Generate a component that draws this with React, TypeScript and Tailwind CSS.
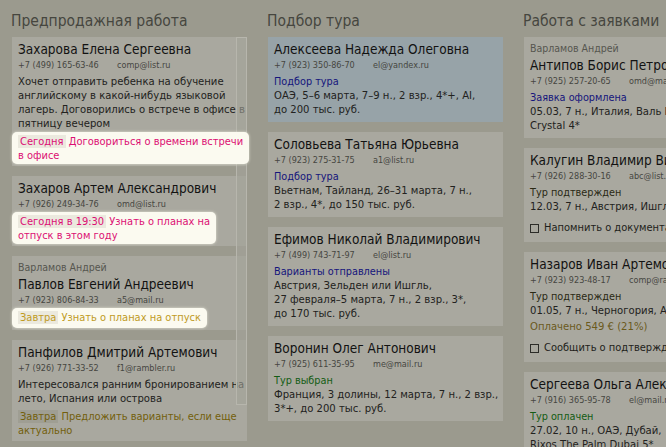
import type { ReactNode } from "react";

type Tone = "pink" | "gold" | "olive";
type StatusTone = "navy" | "green" | "dark";

type Reminder = { tag: string; text: string[]; tone: Tone; lit?: boolean; roomy?: boolean };

type Lead = {
  manager?: string;
  name: string;
  phone: string;
  email: string;
  status?: { label: string; tone: StatusTone };
  lines?: string[];
  paid?: string;
  check?: string;
  reminder?: Reminder;
  tint?: boolean;
};

const reminderTone: Record<Tone, string> = {
  pink: "text-[#dc0f73]",
  gold: "text-[#c09a1e]",
  olive: "text-[#735f0c]",
};

const statusTone: Record<StatusTone, string> = {
  navy: "text-[#15157c]",
  green: "text-[#145c14]",
  dark: "text-[#2a2914]",
};

const presale: Lead[] = [
  {
    name: "Захарова Елена Сергеевна",
    phone: "+7 (499) 165-63-46",
    email: "comp@list.ru",
    lines: [
      "Хочет отправить ребенка на обучение",
      "английскому в какой-нибудь языковой",
      "лагерь. Договорились о встрече в офисе в",
      "пятницу вечером",
    ],
    reminder: {
      tag: "Сегодня",
      text: ["Договориться о времени встречи", "в офисе"],
      tone: "pink",
      lit: true,
    },
  },
  {
    name: "Захаров Артем Александрович",
    phone: "+7 (926) 249-34-76",
    email: "omd@list.ru",
    reminder: {
      tag: "Сегодня в 19:30",
      text: ["Узнать о планах на", "отпуск в этом году"],
      tone: "pink",
      lit: true,
    },
  },
  {
    manager: "Варламов Андрей",
    name: "Павлов Евгений Андреевич",
    phone: "+7 (923) 806-84-33",
    email: "a5@mail.ru",
    reminder: {
      tag: "Завтра",
      text: ["Узнать о планах на отпуск"],
      tone: "gold",
      lit: true,
      roomy: true,
    },
  },
  {
    name: "Панфилов Дмитрий Артемович",
    phone: "+7 (926) 771-33-52",
    email: "f1@rambler.ru",
    lines: ["Интересовался ранним бронированием на", "лето, Испания или острова"],
    reminder: {
      tag: "Завтра",
      text: ["Предложить варианты, если еще", "актуально"],
      tone: "olive",
    },
  },
];

const selection: Lead[] = [
  {
    tint: true,
    name: "Алексеева Надежда Олеговна",
    phone: "+7 (923) 350-86-70",
    email: "el@yandex.ru",
    status: { label: "Подбор тура", tone: "navy" },
    lines: ["ОАЭ, 5–6 марта, 7–9 н., 2 взр., 4*+, AI,", "до 200 тыс. руб."],
  },
  {
    name: "Соловьева Татьяна Юрьевна",
    phone: "+7 (923) 275-31-75",
    email: "a1@list.ru",
    status: { label: "Подбор тура", tone: "navy" },
    lines: ["Вьетнам, Тайланд, 26–31 марта, 7 н.,", "2 взр., 4*, до 150 тыс. руб."],
  },
  {
    name: "Ефимов Николай Владимирович",
    phone: "+7 (499) 743-71-97",
    email: "el@list.ru",
    status: { label: "Варианты отправлены", tone: "navy" },
    lines: [
      "Австрия, Зельден или Ишгль,",
      "27 февраля–5 марта, 7 н., 2 взр., 3*,",
      "до 170 тыс. руб.",
    ],
  },
  {
    name: "Воронин Олег Антонович",
    phone: "+7 (925) 611-35-95",
    email: "me@mail.ru",
    status: { label: "Тур выбран", tone: "green" },
    lines: ["Франция, 3 долины, 12 марта, 7 н., 2 взр.,", "3*+, до 200 тыс. руб."],
  },
];

const orders: Lead[] = [
  {
    manager: "Варламов Андрей",
    name: "Антипов Борис Петрович",
    phone: "+7 (925) 257-20-65",
    email: "omd@mail.ru",
    status: { label: "Заявка оформлена", tone: "navy" },
    lines: ["05.03, 7 н., Италия, Валь Гардена,", "Crystal 4*"],
  },
  {
    name: "Калугин Владимир Викторович",
    phone: "+7 (926) 288-30-16",
    email: "abc@list.ru",
    status: { label: "Тур подтвержден", tone: "dark" },
    lines: ["12.03, 7 н., Австрия, Ишгль, Elisabeth"],
    check: "Напомнить о документах",
  },
  {
    name: "Назаров Иван Артемович",
    phone: "+7 (923) 923-48-17",
    email: "comp@rambler.ru",
    status: { label: "Тур подтвержден", tone: "dark" },
    lines: ["01.05, 7 н., Черногория, Авала 4*"],
    paid: "Оплачено 549 € (21%)",
    check: "Сообщить о подтверждении",
  },
  {
    name: "Сергеева Ольга Алексеевна",
    phone: "+7 (916) 365-95-78",
    email: "el@mail.ru",
    status: { label: "Тур оплачен", tone: "green" },
    lines: ["27.02, 10 н., ОАЭ, Дубай,", "Rixos The Palm Dubai 5*"],
  },
];

function ReminderBox({ reminder }: { reminder: Reminder }) {
  const { tag, text, tone, lit, roomy } = reminder;
  return (
    <div
      className={`relative z-10 -mx-[6px] mt-[1px] w-fit rounded-[5px] px-[6px] text-[11px] leading-[14px] whitespace-nowrap ${
        roomy ? "py-[3px]" : "pt-[3px] pb-[1px]"
      } ${reminderTone[tone]} ${lit ? "bg-[#fbfaf0] shadow-[0_0_3px_rgba(255,255,240,0.7)]" : ""}`}
    >
      <span className={`px-[2px] ${lit ? "bg-[#ebe9de]" : "bg-[#9f9e93]"}`}>{tag}</span>{" "}
      {text.map((t, i) => (
        <span key={i}>
          {i > 0 && <br />}
          {t}
        </span>
      ))}
    </div>
  );
}

function LeadCard({ lead }: { lead: Lead }) {
  const pb = lead.reminder ? "pb-[2px]" : lead.check ? "pb-[7px]" : "pb-[5px]";
  return (
    <div className={`px-[6px] pt-[3px] ${pb} ${lead.tint ? "bg-[#97a3a8]" : "bg-[#a9a89f]"}`}>
      {lead.manager && (
        <div className="text-[10.5px] leading-[16px] text-[#56564f]">{lead.manager}</div>
      )}
      <div className="whitespace-nowrap text-[13.5px] leading-[18px] text-[#121212]">{lead.name}</div>
      <div className="flex whitespace-nowrap text-[9px] leading-[14px] text-[#46463f]">
        <span className="w-[99px] shrink-0">{lead.phone}</span>
        <span>{lead.email}</span>
      </div>
      {lead.status && (
        <div className={`mt-[2px] text-[10.8px] leading-[15px] ${statusTone[lead.status.tone]}`}>
          {lead.status.label}
        </div>
      )}
      {lead.lines && (
        <div className={`text-[11.2px] leading-[14px] text-[#222220] ${lead.status ? "" : "mt-[3px]"}`}>
          {lead.lines.map((l) => (
            <div key={l} className="whitespace-nowrap">
              {l}
            </div>
          ))}
        </div>
      )}
      {lead.paid && (
        <div className="mt-[2px] text-[11.2px] leading-[14px] text-[#6b5a1c]">{lead.paid}</div>
      )}
      {lead.check && (
        <div className="mt-[7px] flex items-center gap-[5px] whitespace-nowrap text-[11px] leading-[14px] text-[#1e1e1a]">
          <span className="h-[9px] w-[9px] shrink-0 border border-[#2c2c28]" />
          {lead.check}
        </div>
      )}
      {lead.reminder && <ReminderBox reminder={lead.reminder} />}
    </div>
  );
}

function Column({ title, children }: { title: string; children: ReactNode }) {
  return (
    <div className="w-[235px] shrink-0">
      <h2 className="-ml-px pt-[10px] pb-[5px] text-[15.5px] leading-[22px] font-normal whitespace-nowrap text-[#46463f]">
        {title}
      </h2>
      {children}
    </div>
  );
}

export default function App() {
  return (
    <div className="h-[447px] w-[666px] overflow-hidden bg-[#9b9a8e] font-['DejaVu_Sans_Condensed','Liberation_Sans',sans-serif]">
      <div className="flex gap-[21px] pl-[12px]">
        <Column title="Предпродажная работа">
          <div className="relative flex flex-col gap-[10px]">
            {presale.map((lead) => (
              <LeadCard key={lead.name} lead={lead} />
            ))}
            {/* полоса прокрутки */}
            <div className="absolute top-0 left-[224px] h-[368px] w-[11px] border border-[#b7b6ad] bg-[#a4a399]/60" />
          </div>
        </Column>
        <Column title="Подбор тура">
          <div className="flex flex-col gap-[10px]">
            {selection.map((lead) => (
              <LeadCard key={lead.name} lead={lead} />
            ))}
          </div>
        </Column>
        <Column title="Работа с заявками">
          <div className="flex flex-col gap-[10px]">
            {orders.map((lead) => (
              <LeadCard key={lead.name} lead={lead} />
            ))}
          </div>
        </Column>
      </div>
    </div>
  );
}
